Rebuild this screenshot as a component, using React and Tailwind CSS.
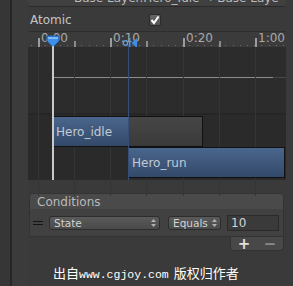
import { useState } from 'react'

const ui = { fontFamily: '"DejaVu Sans", "Liberation Sans", sans-serif' }
const cjk = { fontFamily: '"Noto Sans CJK SC", "Liberation Sans", sans-serif' }
const mono = { fontFamily: '"Liberation Mono", "DejaVu Sans Mono", monospace' }

// x positions inside the 258px timeline column
const majors = [{ x: 10, t: '0:00' }, { x: 82, t: '0:10' }, { x: 155, t: '0:20' }, { x: 227, t: '1:00' }]
const minors = [46, 118, 191]

function Ruler() {
  const dots = []
  for (let x = 3; x < 258; x += 7.2) dots.push(Math.round(x))
  return (
    <div className="relative h-[16px] bg-[#3b3b3b] border-t border-[#2e2e2e]">
      <svg width="258" height="16" className="absolute left-0 top-0">
        {dots.map((x) => (
          <rect key={x} x={x} y="13" width="1" height="1" fill="#6e6e6e" />
        ))}
        {majors.map((m) => (
          <rect key={m.x} x={m.x} y="6" width="2" height="9" fill="#9c9c9c" />
        ))}
        {minors.map((x) => (
          <rect key={x} x={x} y="9" width="2" height="6" fill="#8a8a8a" />
        ))}
      </svg>
      {majors.map((m) => (
        <span key={m.t} className="absolute top-[0px] text-[12px] leading-[13px] text-[#a9a9a9]" style={{ left: m.x + 3 }}>
          {m.t}
        </span>
      ))}
      {/* playhead marker */}
      <svg width="14" height="13" viewBox="0 0 14 13" className="absolute left-[18px] top-[3px]">
        <path d="M1 1 H13 V6 L7 12 L1 6 Z" fill="#3d8ee8" stroke="#1f5fae" strokeWidth="1" />
        <path d="M2 2 H12 V4 H2 Z" fill="#7fb8f5" />
      </svg>
      {/* event marker */}
      <svg width="16" height="12" viewBox="0 0 16 12" className="absolute left-[94px] top-[4px]">
        <circle cx="3.5" cy="7" r="2.3" fill="none" stroke="#5fa4ee" strokeWidth="1.3" />
        <rect x="7" y="2" width="1.5" height="10" fill="#4d93e4" />
        <path d="M15 2 V12 L9.5 7 Z" fill="#3d8ee8" />
      </svg>
    </div>
  )
}

function Clip({ name, className }) {
  return (
    <div className={`h-[31px] flex items-center border border-[#111] bg-gradient-to-b from-[#4a668c] to-[#33496a] ${className}`}>
      <span className="ml-[3px] text-[12px] text-[#c3cad3]">{name}</span>
    </div>
  )
}

function Timeline() {
  const grid = [10, 46, 82, 118, 155, 191, 227]
  return (
    <div className="relative">
      <Ruler />
      <div className="relative h-[66px] bg-[#2c2c2c]">
        <div className="absolute left-[24px] top-[30px] w-[221px] h-[1px] bg-[#8c8c8c]" />
        <div className="absolute left-[245px] top-[30px] w-[13px] h-[1px] bg-[#474747]" />
      </div>
      <div className="h-[2px] bg-[#262626]" />
      <div className="h-[65px] bg-[#2a2a2a] pt-[1px] flex flex-col">
        <div className="relative z-10 flex pl-[25px]">
          <Clip name="Hero_idle" className="w-[76px] border-l-0 border-r-0" />
          <div className="w-[74px] h-[31px] bg-gradient-to-b from-[#464646] to-[#3a3a3a] border border-[#111] border-l-0" />
        </div>
        <div className="relative z-10 flex pl-[100px]">
          <Clip name="Hero_run" className="w-[157px]" />
        </div>
      </div>
      <svg width="258" height="149" className="absolute left-0 top-[16px] z-0">
        {grid.map((x) => (
          <rect key={x} x={x} y="0" width="1" height="149" fill="#353535" />
        ))}
      </svg>
      <div className="absolute z-20 left-[24px] top-[15px] w-[2px] h-[134px] bg-[#c9c9c9]" />
      <div className="absolute z-20 left-[100px] top-[12px] w-[1px] h-[137px] bg-[#34507a]" />
    </div>
  )
}

function UpDown() {
  return (
    <svg width="5" height="8" viewBox="0 0 5 8" className="shrink-0">
      <path d="M2.5 0 L5 3 H0 Z M2.5 8 L5 5 H0 Z" fill="#b0b0b0" />
    </svg>
  )
}

function Dropdown({ label, className }) {
  return (
    <div className={`h-[14px] flex items-center justify-between rounded-[3px] border border-[#2d2d2d] bg-gradient-to-b from-[#5a5a5a] to-[#4a4a4a] pl-[4px] pr-[3px] ${className}`}>
      <span className="text-[10.5px] leading-[12px] text-[#d2d2d2]">{label}</span>
      <UpDown />
    </div>
  )
}

function Conditions() {
  const [value] = useState('10')
  return (
    <div className="ml-[1px] w-[255px]">
      <div className="rounded-t-[4px] overflow-hidden border border-[#333]">
        <div className="h-[15px] bg-[#4a4a4a] flex items-center pl-[7px]">
          <span className="text-[12px] text-[#b9b9b9]">Conditions</span>
        </div>
        <div className="h-[27px] bg-[#414141] flex items-center pl-[3px]">
          <div className="w-[10px] flex flex-col gap-[2px] mr-[6px]">
            <div className="h-[1px] bg-[#141414]" />
            <div className="h-[1px] bg-[#141414]" />
          </div>
          <Dropdown label="State" className="w-[111px]" />
          <Dropdown label="Equals" className="w-[53px] ml-[8px]" />
          <div className="ml-[6px] w-[52px] h-[16px] bg-[#3a3a3a] border border-[#2a2a2a] flex items-center pl-[3px]">
            <span className="text-[12px] text-[#d4d4d4]">{value}</span>
          </div>
        </div>
      </div>
      <div className="flex justify-end">
        <div className="w-[54px] h-[14px] bg-[#484848] rounded-b-[4px] border border-t-0 border-[#333] flex items-center justify-around text-[15px] leading-[14px] font-bold">
          <span className="text-[#e0e0e0]">+</span>
          <span className="text-[#8a8a8a]">−</span>
        </div>
      </div>
    </div>
  )
}

export default function App() {
  return (
    <div className="w-[293px] h-[286px] overflow-hidden bg-[#3a3a3a] flex" style={ui}>
      <div className="w-[10px] bg-[#363636]" />
      <div className="w-[2px] bg-[#262626]" />
      <div className="w-[16px] bg-[#3b3b3b]" />
      <div className="w-[258px] flex flex-col">
        <div className="h-[7px] overflow-hidden bg-[#404040] border-b border-[#2a2a2a] rounded-b-[3px]">
          <div className="mt-[-8px] ml-[46px] text-[12px] leading-[13px] text-[#bcbcbc] whitespace-nowrap">
            Base Layer.Hero_Idle → Base Laye
          </div>
        </div>
        <div className="mt-[6px] h-[14px] flex items-center">
          <span className="w-[121px] pl-[2px] text-[12px] text-[#c4c4c4]">Atomic</span>
          <div className="w-[12px] h-[12px] rounded-[2px] bg-gradient-to-b from-[#666] to-[#555] border border-[#2c2c2c] flex items-center justify-center">
            <svg width="10" height="10" viewBox="0 0 10 10">
              <path d="M1.5 5 L4 8 L8.5 1.5" fill="none" stroke="#fff" strokeWidth="2" />
            </svg>
          </div>
        </div>
        <div className="mt-[4px]">
          <Timeline />
        </div>
        <div className="mt-[13px]">
          <Conditions />
        </div>
        <div className="mt-[14px] ml-[25px] flex items-baseline text-white whitespace-nowrap">
          <span className="text-[13px] leading-[15px]" style={cjk}>出自</span>
          <span className="text-[11.5px] leading-[15px]" style={mono}>www.cgjoy.com</span>
          <span className="ml-[5px] text-[13px] leading-[15px]" style={cjk}>版权归作者</span>
        </div>
      </div>
      <div className="w-[7px] bg-[#3a3a3a]" />
    </div>
  )
}
